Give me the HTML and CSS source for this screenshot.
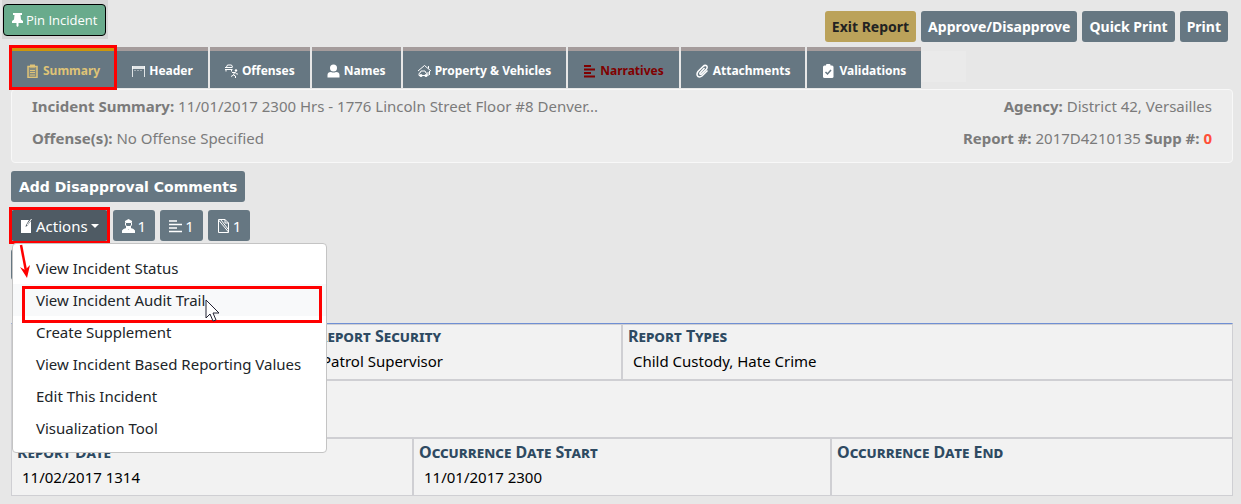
FILE: index.html
```
<!DOCTYPE html>
<html lang="en">
<head>
  <meta charset="UTF-8" />
  <meta name="viewport" content="width=device-width, initial-scale=1.0"/>
  <title>Incident Report</title>
  <link rel="stylesheet" href="styles.css">
</head>
<body>
  <header class="topbar">
    <div class="pin-wrap">
      <button class="pin-btn" type="button">
        <svg class="icon-pin" viewBox="0 0 11 14"><path d="M1 0h9v2H8.500l.5 4.500 2 1.500v2H6.500v3l-1 1-1-1v-3H0V8l2-1.500L2.500 2H1z" fill="currentColor"/></svg>
        Pin Incident
      </button>
    </div>
    <div class="report-buttons">
      <button class="btn btn-gold" type="button">Exit Report</button>
      <button class="btn" type="button">Approve/Disapprove</button>
      <button class="btn" type="button">Quick Print</button>
      <button class="btn" type="button">Print</button>
    </div>
  </header>

  <nav class="tabs">
    <a class="tab active" href="#summary">
      <svg class="icon" viewBox="0 0 13 14"><path d="M2 2.500h9v11H2z" fill="currentColor" fill-opacity=".25" stroke="currentColor" stroke-width="1.500"/><path d="M4 .5h5v3H4z" fill="currentColor"/><path d="M4 6.500h5M4 8.500h5M4 11h5" stroke="currentColor"/></svg>
      Summary
    </a>
    <a class="tab" href="#header">
      <svg class="icon" viewBox="0 0 13 14"><path d="M0 2h13v2H0z" fill="currentColor" opacity=".8"/><path d="M.5 2v11M12.500 2v11M0 4.500h13M2.500 6.500h1M5.500 6.500h1M8.500 6.500h1" fill="none" stroke="currentColor" stroke-opacity=".8"/></svg>
      Header
    </a>
    <a class="tab" href="#offenses">
      <svg class="icon" viewBox="0 0 13 14"><path d="M1.500 3L2.500 1h4l1 2M0 3.500h7.500M0 5.500h7.500M1 6v1.500M6.500 6v1.500" fill="none" stroke="currentColor"/><path d="M7 8.500h3.500l1 1.500H13M9.500 8.500L8.500 11l2 1v2M8.500 11L6 12.500" fill="none" stroke="currentColor"/><circle cx="11" cy="6.500" r="1.200" fill="currentColor"/></svg>
      Offenses
    </a>
    <a class="tab" href="#names">
      <svg class="icon" viewBox="0 0 13 14"><circle cx="6.500" cy="4" r="3.500" fill="currentColor"/><path d="M.5 13.500v-2.500q0-3 3.500-3q2.500 1 5 0q3.500 0 3.500 3v2.500z" fill="currentColor"/></svg>
      Names
    </a>
    <a class="tab" href="#property">
      <svg class="icon" viewBox="0 0 13 14"><path d="M0 7l6.500-5.500L13 7M10.500 2v2.500M11.500 7v4M2 9l1-2h4l1 2 1 .5v2H1V9.500zM10 8v4" fill="none" stroke="currentColor"/><circle cx="3" cy="11.500" r="1.500" fill="currentColor"/><circle cx="8" cy="11.500" r="1.500" fill="currentColor"/></svg>
      Property &amp; Vehicles
    </a>
    <a class="tab narratives" href="#narratives">
      <svg class="icon" viewBox="0 0 13 14"><path d="M1 2h7M1 5.500h11M1 9h7M1 12.500h11" fill="none" stroke="currentColor" stroke-width="2"/></svg>
      Narratives
    </a>
    <a class="tab" href="#attachments">
      <svg class="icon" viewBox="0 0 13 14"><path d="M8.500 4L4 9q-.5 1.500 1 1.500L10.500 5q1.500-2.500-.5-3.500-1.500-.5-3 1L2 7.500Q0 10.500 2 12.500q2 1 4-.5L11.500 6.500" fill="none" stroke="currentColor" stroke-width="1.500"/></svg>
      Attachments
    </a>
    <a class="tab" href="#validations">
      <svg class="icon" viewBox="0 0 13 14"><rect x="1" y="1.500" width="10.500" height="12.500" rx="1.500" fill="currentColor"/><rect x="4" y="0" width="4.500" height="3" rx="1" fill="currentColor"/><path d="M3.500 8l2 2L9 6" fill="none" stroke="#667782" stroke-width="1.500"/></svg>
      Validations
    </a>
    <span class="tab-blank"></span>
  </nav>

  <main>
    <section class="summary" id="summary">
      <div>
        <p><b>Incident Summary:</b> 11/01/2017 2300 Hrs - 1776 Lincoln Street Floor #8 Denver...</p>
        <p><b>Offense(s):</b> No Offense Specified</p>
      </div>
      <div class="summary-right">
        <p><b>Agency:</b> District 42, Versailles</p>
        <p><b>Report #:</b> 2017D4210135 <b>Supp #:</b> <b class="supp">0</b></p>
      </div>
    </section>

    <button class="btn disapproval-btn" type="button">Add Disapproval Comments</button>

    <div class="toolbar">
      <div class="dropdown">
        <button class="btn tool-btn actions-btn" type="button" aria-expanded="true">
          <svg class="icon" viewBox="0 0 13 14"><path d="M1 1h8L6 6l-.5 2L7 7l4-5v12H1z" fill="currentColor"/><path d="M11.500 0L7 6" stroke="currentColor"/></svg>
          Actions
          <span class="caret"></span>
        </button>
        <div class="menu">
          <a href="#status">View Incident Status</a>
          <a class="hover" href="#audit">View Incident Audit Trail</a>
          <a href="#supplement">Create Supplement</a>
          <a href="#values">View Incident Based Reporting Values</a>
          <a href="#edit">Edit This Incident</a>
          <a href="#visualization">Visualization Tool</a>
        </div>
        <svg class="arrow" viewBox="0 0 14 36"><path d="M3 1l5 26" stroke="#f00" stroke-width="2.500"/><path d="M2 23l5 3 5-5-3 13z" fill="#f00"/></svg>
        <svg class="cursor" viewBox="0 0 16 24"><path d="M1 1v18l4-4 3 7 3-1-3-7h6z" fill="#fff" stroke="#223"/></svg>
      </div>
      <button class="btn tool-btn" type="button">
        <svg class="icon" viewBox="0 0 13 14"><path d="M3 2L6.500 0 10 2v1H3z" fill="currentColor"/><path d="M3.500 3.500h6V6q-3 4.500-6 0z" fill="none" stroke="currentColor"/><path d="M4 7h5v3H4zM0 14v-2.500Q1 9.500 4 9l2.500 1.500L9 9q3 .5 4 2.500V14z" fill="currentColor"/></svg>
        1
      </button>
      <button class="btn tool-btn" type="button">
        <svg class="icon" viewBox="0 0 13 14"><path d="M0 2h8M0 5.500h13M0 9h8M0 12.500h13" stroke="currentColor" stroke-width="1.500"/></svg>
        1
      </button>
      <button class="btn tool-btn" type="button">
        <svg class="icon" viewBox="0 0 13 14"><path d="M1.500.5H8L11.500 4v9.500h-10zM8 .5V4h3.500M1.500 1l10 12M4 1l7 9" fill="none" stroke="currentColor"/></svg>
        1
      </button>
    </div>

    <div class="hidden-row"><button class="btn hidden-btn" type="button" aria-label="More"></button></div>

    <section class="details">
      <div class="row row-types">
        <div class="cell"></div>
        <div class="cell"><h2>Report Security</h2><p>Patrol Supervisor</p></div>
        <div class="cell"><h2>Report Types</h2><p>Child Custody, Hate Crime</p></div>
      </div>
      <div class="row">
        <div class="cell"></div>
      </div>
      <div class="row row-dates">
        <div class="cell"><h2>Report Date</h2><p>11/02/2017 1314</p></div>
        <div class="cell"><h2>Occurrence Date Start</h2><p>11/01/2017 2300</p></div>
        <div class="cell"><h2>Occurrence Date End</h2></div>
      </div>
    </section>
  </main>
</body>
</html>
```
FILE: styles.css
```
*, *::before, *::after {
  margin: 0;
  padding: 0;
  box-sizing: border-box;
}
body {
  background: #e7e7e7;
  color: #7b7b7b;
  font-family: "Noto Sans", "Open Sans", sans-serif;
  font-size: 15px;
  line-height: 24px;
}
button {
  font-family: inherit;
  cursor: pointer;
}
a {
  text-decoration: none;
}
.topbar {
  display: flex;
  justify-content: space-between;
  align-items: flex-start;
  height: 47px;
  padding: 0 13px 0 2px;
}
.pin-wrap {
  background: #d6d6d6;
  padding: 4px 2px 3px 1px;
  height: 39px;
}
.pin-btn {
  display: flex;
  align-items: center;
  gap: 3px;
  height: 32px;
  padding: 0 8px;
  background: #69ab8c;
  color: #fff;
  border: 1px solid #000;
  border-radius: 4px;
  font-family: "Open Sans", sans-serif;
  font-size: 13px;
}
.icon-pin {
  width: 11px;
  height: 14px;
}
.report-buttons {
  display: flex;
  gap: 5px;
  padding-top: 11px;
}
.btn {
  height: 31px;
  padding: 0 7px;
  background: #667782;
  color: #fff;
  border: none;
  border-radius: 3px;
  font-size: 14px;
  font-weight: bold;
  white-space: nowrap;
}
.btn-gold {
  background: #bba25a;
  color: #222;
}
.tabs {
  display: flex;
  gap: 2px;
  padding-left: 11px;
}
.tab {
  display: flex;
  align-items: center;
  gap: 4px;
  height: 41px;
  padding: 3px 15px 0;
  background: #667782;
  border-top: 4px solid #a59c9c;
  color: #fff;
  font-size: 12px;
  font-weight: bold;
  white-space: nowrap;
}
.tab.active {
  color: #dfc377;
  border-top-color: #cc960c;
  outline: 3px solid #f00;
  outline-offset: -1px;
}
.tab.narratives {
  color: #800000;
}
.tab-blank {
  width: 45px;
  height: 31px;
  margin: 4px 0 0 -2px;
  background: #eaeaea;
}
.icon {
  width: 13px;
  height: 14px;
  flex: none;
}
main {
  padding: 0 8px 0 11px;
}
.summary {
  display: flex;
  justify-content: space-between;
  margin-top: 1px;
  padding: 0 20px 8px;
  background: #ededed;
  border: 1px solid #f8f8f8;
  border-radius: 4px;
}
.summary p {
  line-height: 32px;
}
.summary-right {
  text-align: right;
}
.supp {
  color: #ff4f38;
}
.disapproval-btn {
  display: block;
  margin-top: 8px;
  padding: 0 8px;
  font-family: "DejaVu Sans", Verdana, sans-serif;
}
.toolbar {
  display: flex;
  gap: 5px;
  margin-top: 8px;
}
.dropdown {
  position: relative;
}
.tool-btn {
  display: flex;
  align-items: center;
  gap: 3px;
  padding: 0 9px;
  font-size: 15px;
  font-weight: normal;
}
.actions-btn {
  background: #4f5b64;
}
.actions-btn::after {
  content: "";
  position: absolute;
  inset: -3px -2px;
  border: 3px solid #f00;
}
.caret {
  border: 4px solid transparent;
  border-top-color: #fff;
  border-bottom: 0;
}
.menu {
  position: absolute;
  top: 33px;
  left: 1px;
  z-index: 5;
  width: 315px;
  padding: 8px 0;
  background: #fff;
  border: 1px solid #c4c4c4;
  border-radius: 4px;
}
.menu a {
  display: block;
  padding: 0 23px;
  color: #212529;
  line-height: 32px;
  white-space: nowrap;
}
.menu a.hover {
  background: #f8f9fa;
}
.menu a.hover::after {
  content: "";
  position: absolute;
  top: 42px;
  left: 9px;
  right: 4px;
  height: 37px;
  border: 3px solid #f00;
}
.arrow {
  position: absolute;
  top: 34px;
  left: 7px;
  z-index: 6;
  width: 14px;
  height: 36px;
}
.cursor {
  position: absolute;
  top: 89px;
  left: 194px;
  z-index: 6;
  width: 16px;
  height: 24px;
}
.hidden-row {
  padding: 8px 0 43px;
}
.hidden-btn {
  display: block;
  width: 60px;
}
.details {
  background: #f2f2f2;
  border: 1px solid #cfcfd3;
  border-top-color: #6f8fd4;
}
.row {
  display: grid;
  grid-template-columns: 1fr;
  min-height: 58px;
  border-top: 2px solid #cfcfd3;
}
.row-types {
  grid-template-columns: 298fr 311fr 611fr;
  min-height: 55px;
  border-top-width: 1px;
}
.row-dates {
  grid-template-columns: 400fr 418fr 402fr;
}
.row-dates .cell {
  padding-top: 2px;
}
.cell {
  padding: 0 5px;
}
.cell + .cell {
  border-left: 2px solid #cfcfd3;
}
.cell h2 {
  color: #2e4a62;
  font-size: 16px;
  font-variant: small-caps;
  line-height: 22px;
}
.cell p {
  padding-left: 5px;
  color: #000;
  line-height: 28px;
}
```
